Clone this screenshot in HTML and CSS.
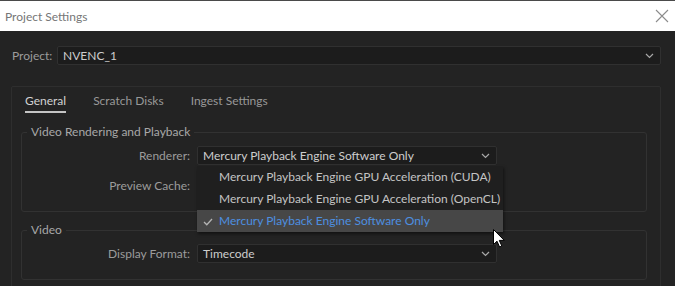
FILE: index.html
```html
<!DOCTYPE html>
<html lang="en">
<head>
    <meta charset="UTF-8">
    <meta name="viewport" content="width=device-width, initial-scale=1.0">
    <title>Project Settings</title>
    <link rel="stylesheet" href="styles.css">
</head>
<body>

    <div class="titlebar">
        <span class="title">Project Settings</span>
        <svg class="close-icon" width="14" height="14" viewBox="0 0 14 14">
            <path d="M1 1 L13 13 M13 1 L1 13" stroke="#8c8c8c" stroke-width="1.1" fill="none"/>
        </svg>
    </div>

    <div class="dialog">
        <div class="project-row">
            <label class="project-label">Project:</label>
            <div class="select select-wide">
                <span>NVENC_1</span>
                <svg class="chevron" width="9" height="6" viewBox="0 0 9 6"><path d="M1 1 L4.5 4.5 L8 1" stroke="#a8a8a8" stroke-width="1.2" fill="none"/></svg>
            </div>
        </div>

        <div class="tab-panel">
            <div class="tabs">
                <span class="tab active">General</span>
                <span class="tab">Scratch Disks</span>
                <span class="tab">Ingest Settings</span>
            </div>

            <fieldset class="group">
                <legend>Video Rendering and Playback</legend>
                <div class="form-row first">
                    <label>Renderer:</label>
                    <div class="select">
                        <span>Mercury Playback Engine Software Only</span>
                        <svg class="chevron" width="9" height="6" viewBox="0 0 9 6"><path d="M1 1 L4.5 4.5 L8 1" stroke="#a8a8a8" stroke-width="1.2" fill="none"/></svg>
                    </div>

                    <!-- open dropdown list -->
                    <ul class="menu">
                        <li>Mercury Playback Engine GPU Acceleration (CUDA)</li>
                        <li>Mercury Playback Engine GPU Acceleration (OpenCL)</li>
                        <li class="checked">
                            <svg class="check" width="10" height="8" viewBox="0 0 10 8"><path d="M1 4 L3.8 6.8 L9 1" stroke="#b4b4b4" stroke-width="1.3" fill="none"/></svg>
                            Mercury Playback Engine Software Only
                        </li>
                    </ul>
                    <svg class="cursor" width="13" height="19" viewBox="0 0 13 19">
                        <path d="M0.5 0.5 L0.5 15.5 L4 12.2 L6.6 18 L8.8 17 L6.3 11.4 L11.3 11.4 Z" fill="#fff" stroke="#000" stroke-width="1"/>
                    </svg>
                </div>
                <div class="form-row">
                    <label>Preview Cache:</label>
                    <div class="select"></div>
                </div>
            </fieldset>

            <fieldset class="group">
                <legend>Video</legend>
                <div class="form-row first">
                    <label>Display Format:</label>
                    <div class="select">
                        <span>Timecode</span>
                        <svg class="chevron" width="9" height="6" viewBox="0 0 9 6"><path d="M1 1 L4.5 4.5 L8 1" stroke="#a8a8a8" stroke-width="1.2" fill="none"/></svg>
                    </div>
                </div>
            </fieldset>
        </div>
    </div>

</body>
</html>
```

FILE: styles.css
```css
body {
    margin: 0;
    padding: 0;
    font-family: 'Lato', 'Liberation Sans', sans-serif;
    font-size: 12px;
    background-color: #232323;
    overflow: hidden;
}

.titlebar {
    height: 30px;
    background-color: #fff;
    border-top: 1px solid #4a4a4a;
    display: flex;
    align-items: center;
    justify-content: space-between;
    padding: 0 6px 0 5px;
}

.title {
    font-size: 12px;
    color: #767676;
}

.close-icon {
    margin-top: -1px;
}

.dialog {
    height: 255px;
    background-color: #232323;
    padding: 15px 14px 0 0;
    box-sizing: border-box;
    overflow: hidden;
}

.project-row {
    display: flex;
    align-items: center;
}

.project-label {
    width: 45px;
    padding-left: 12px;
    color: #9c9c9c;
}

.select {
    height: 19px;
    box-sizing: border-box;
    background-color: #1c1c1c;
    border: 1px solid #303030;
    border-radius: 2px;
    display: flex;
    align-items: center;
    justify-content: space-between;
    padding: 0 6px 0 5px;
    color: #cdcdcd;
}

.select-wide {
    flex: 1;
}

.chevron {
    display: block;
}

.tab-panel {
    margin: 21px 0 0 11px;
    height: 300px;
    border: 1px solid #2e2e2e;
    border-radius: 2px;
}

.tabs {
    display: flex;
    gap: 27px;
    padding: 6px 0 0 13px;
}

.tab {
    line-height: 16px;
    padding-bottom: 2px;
    border-bottom: 2px solid transparent;
    color: #989898;
}

.tab.active {
    color: #d2d2d2;
    border-bottom-color: #c4c4c4;
}

.group {
    margin: 11px 13px 0 9px;
    padding: 0 0 16px 0;
    border: 1px solid #323232;
    border-radius: 3px;
    min-width: 0;
}

.group + .group {
    margin-top: 10px;
}

.group legend {
    margin-left: 5px;
    padding: 0 4px;
    line-height: 16px;
    color: #a8a8a8;
}

.form-row {
    display: grid;
    grid-template-columns: 175px 300px;
    align-items: center;
    margin-top: 11px;
    position: relative;
}

.form-row.first {
    margin-top: 6px;
}

.form-row label {
    text-align: right;
    padding-right: 7px;
    color: #9c9c9c;
}

.menu {
    position: absolute;
    top: 20px;
    left: 175px;
    width: 306px;
    margin: 0;
    padding: 0;
    list-style: none;
    background-color: #1f1f1f;
    box-shadow: 1px 2px 3px rgba(0, 0, 0, 0.5);
    z-index: 2;
}

.menu li {
    height: 22px;
    line-height: 22px;
    padding-left: 22px;
    color: #c4c4c4;
    position: relative;
}

.menu li.checked {
    background-color: #474747;
    color: #4d8fe0;
}

.check {
    position: absolute;
    left: 6px;
    top: 8px;
}

.cursor {
    position: absolute;
    left: 471px;
    top: 83px;
    z-index: 3;
}
```
